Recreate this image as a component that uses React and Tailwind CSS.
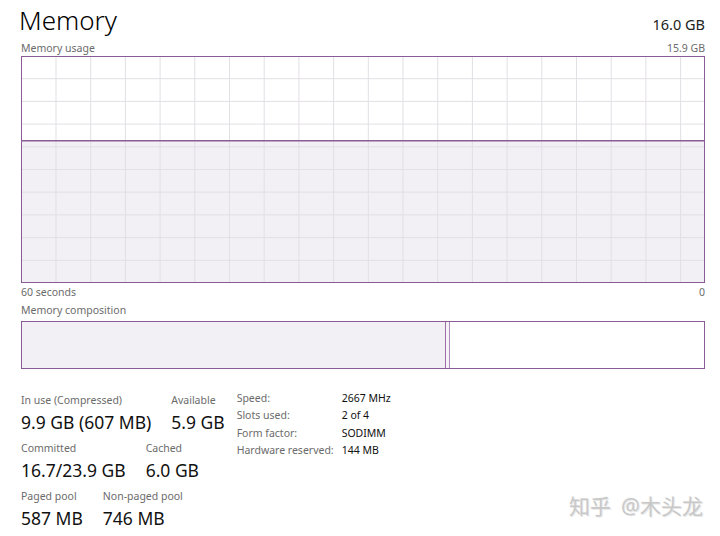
const purple = "#8a5c96";

const vLines = Array.from({ length: 19 }, (_, k) => 34 + 34.7 * k);
const hLines = Array.from({ length: 9 }, (_, k) => 21.7 + 22.7 * k);

function UsageGraph() {
  return (
    <div className="h-[227px] border border-[#8a5c96] bg-white">
      <svg width="682" height="225" className="block">
        <rect x="0" y="84" width="682" height="141" fill="#f2f0f4" />
        {vLines.map((x) => (
          <line key={x} x1={x} y1="0" x2={x} y2="225" stroke="#e2dfe5" strokeWidth="1" />
        ))}
        {hLines.map((y) => (
          <line key={y} x1="0" y1={y} x2="682" y2={y} stroke="#e2dfe5" strokeWidth="1" />
        ))}
        <line x1="0" y1="83.7" x2="682" y2="83.7" stroke={purple} strokeWidth="1.5" />
      </svg>
    </div>
  );
}

function Stat({ label, value }) {
  return (
    <div className="flex flex-col">
      <span className="text-[10.5px] leading-4 text-[#6b6b6b]">{label}</span>
      <span className="text-[17.5px] leading-[28px] text-[#111]">{value}</span>
    </div>
  );
}

const specs = [
  ["Speed:", "2667 MHz"],
  ["Slots used:", "2 of 4"],
  ["Form factor:", "SODIMM"],
  ["Hardware reserved:", "144 MB"],
];

export default function App() {
  return (
    <div
      className="relative h-[536px] w-[720px] overflow-hidden bg-white pl-[21px] pr-[15px]"
      style={{ fontFamily: '"Noto Sans", "Open Sans", sans-serif' }}
    >
      <div className="flex h-[40px] items-baseline justify-between">
        <span className="-ml-[2px] text-[26px] font-light leading-[40px] text-black">Memory</span>
        <span className="text-[14.5px] leading-[40px] text-[#222]">16.0 GB</span>
      </div>

      <div className="flex h-4 justify-between text-[10.5px] leading-4 text-[#6b6b6b]">
        <span>Memory usage</span>
        <span>15.9 GB</span>
      </div>

      <UsageGraph />

      <div className="mt-px flex h-4 justify-between text-[10.5px] leading-4 text-[#6b6b6b]">
        <span>60 seconds</span>
        <span>0</span>
      </div>
      <div className="mt-[2px] h-4 text-[10.5px] leading-4 text-[#6b6b6b]">Memory composition</div>

      <div className="mt-[3px] flex h-[48px] border border-[#8a5c96]">
        <div className="w-[424px] border-r border-[#9a70a6] bg-[#f2f0f4]" />
        <div className="w-[4px] border-r border-[#b08dba] bg-[#f6f2f7]" />
        <div className="flex-1 bg-white" />
      </div>

      <div className="mt-[21px] flex gap-3">
        <div className="flex flex-col gap-1 pt-[2px]">
          <div className="flex gap-5">
            <Stat label="In use (Compressed)" value="9.9 GB (607 MB)" />
            <Stat label="Available" value="5.9 GB" />
          </div>
          <div className="flex gap-5">
            <Stat label="Committed" value="16.7/23.9 GB" />
            <Stat label="Cached" value="6.0 GB" />
          </div>
          <div className="flex gap-5">
            <Stat label="Paged pool" value="587 MB" />
            <Stat label="Non-paged pool" value="746 MB" />
          </div>
        </div>

        <div className="flex flex-col text-[10.5px] leading-[17.3px]">
          {specs.map(([k, v]) => (
            <div key={k} className="flex">
              <span className="w-[105px] text-[#6b6b6b]">{k}</span>
              <span className="text-[#111]">{v}</span>
            </div>
          ))}
        </div>
      </div>

      <div
        className="absolute right-[17px] top-[491px] flex gap-[10px] text-[21px] leading-[30px] text-[#c8c8c8] [text-shadow:1px_1px_0_#e8e8e8,-1px_-1px_0_#fbfbfb]"
        style={{ fontFamily: '"Noto Sans", "Noto Sans CJK SC", sans-serif' }}
      >
        <span>知乎</span>
        <span>@木头龙</span>
      </div>
    </div>
  );
}
